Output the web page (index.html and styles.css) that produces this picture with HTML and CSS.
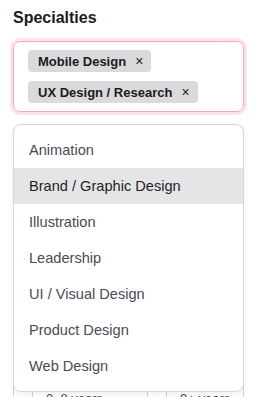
FILE: index.html
```html
<!DOCTYPE html>
<html lang="en">
<head>
    <meta charset="UTF-8">
    <meta name="viewport" content="width=device-width, initial-scale=1.0">
    <title>Specialties</title>
    <link rel="stylesheet" href="styles.css">
</head>
<body>
    <label class="field-label">Specialties</label>
    <div class="tag-input">
        <span class="chip">Mobile Design <span class="chip-x">&times;</span></span>
        <span class="chip">UX Design / Research <span class="chip-x">&times;</span></span>
    </div>

    <ul class="menu">
        <li>Animation</li>
        <li class="active">Brand / Graphic Design</li>
        <li>Illustration</li>
        <li>Leadership</li>
        <li>UI / Visual Design</li>
        <li>Product Design</li>
        <li>Web Design</li>
    </ul>

    <div class="experience">
        <label class="field-label">Experience</label>
        <div class="years">
            <div class="cell narrow"></div>
            <div class="cell wide">0–8 years</div>
            <div class="cell narrow"></div>
            <div class="cell">9+ years</div>
        </div>
    </div>
</body>
</html>
```

FILE: styles.css
```css
body {
    margin: 0;
    padding: 9px 14px 0 13px;
    font-family: 'Liberation Sans', Arial, sans-serif;
    background: #ffffff;
    color: #1c1c1e;
    position: relative;
}
.field-label {
    display: block;
    font-size: 16px;
    font-weight: 700;
    line-height: 18px;
    margin-bottom: 14px;
}
.tag-input {
    display: flex;
    flex-direction: column;
    align-items: flex-start;
    gap: 9px;
    padding: 8px 14px;
    border: 1px solid #f2a7c0;
    border-radius: 7px;
    box-shadow: 0 0 0 3px #fde3ec;
}
.chip {
    display: inline-flex;
    align-items: center;
    height: 22px;
    padding: 0 8px 0 10px;
    background: #dadadd;
    border-radius: 4px;
    font-size: 13px;
    font-weight: 700;
    color: #1c1c1e;
}
.chip-x {
    margin-left: 9px;
    font-size: 14px;
    font-weight: 400;
}
.menu {
    position: absolute;
    top: 124px;
    left: 13px;
    width: 229px;
    margin: 0;
    padding: 7px 0;
    list-style: none;
    background: #ffffff;
    border: 1px solid #d6d6da;
    border-radius: 8px;
    box-shadow: 0 2px 6px rgba(0,0,0,0.07);
    z-index: 2;
}
.menu li {
    height: 36px;
    line-height: 36px;
    padding-left: 15px;
    font-size: 14.6px;
    color: #4a4a56;
}
.menu li.active {
    background: #e5e5e8;
    color: #1f1f25;
}
.experience {
    margin-top: 230px;
}
.experience .field-label {
    margin-bottom: 20px;
}
.years {
    display: flex;
    height: 36px;
    border: 1px solid #cfcfd4;
}
.cell {
    flex: 1;
    padding-left: 13px;
    line-height: 36px;
    font-size: 13px;
    color: #4a4a56;
    border-left: 1px solid #cfcfd4;
}
.cell:first-child {
    border-left: none;
}
.cell.narrow {
    flex: none;
    width: 5px;
}
.cell.wide {
    flex: none;
    width: 101px;
}
```
